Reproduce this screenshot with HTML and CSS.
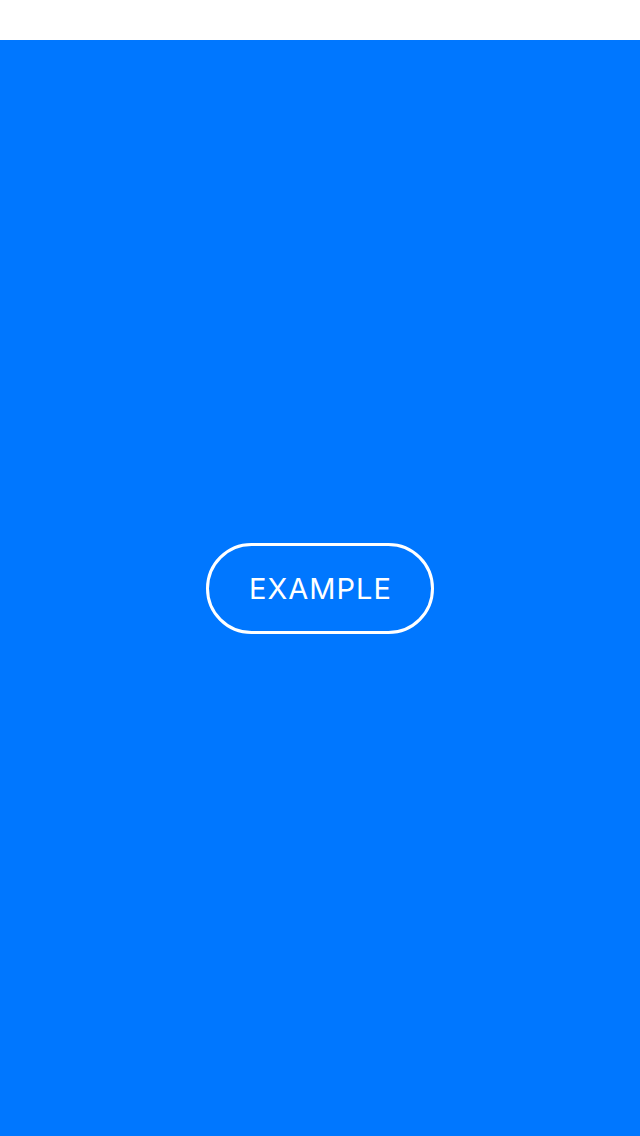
FILE: index.html
```html
<!DOCTYPE html>
<html>
<head>
<meta charset="utf-8">
<link rel="stylesheet" href="styles.css">
</head>
<body>
<div class="top"></div>
<main class="stage">
  <button class="pill"><span class="label">EXAMPLE</span></button>
</main>
</body>
</html>
```
FILE: styles.css
```css
html, body {
  margin: 0;
  padding: 0;
  background: #ffffff;
}
body {
  display: flex;
  flex-direction: column;
  height: 1136px;
}
.top {
  height: 40px;
  background: #ffffff;
}
.stage {
  flex: 1;
  background: #0077ff;
  display: flex;
  align-items: center;
  justify-content: center;
}
.pill {
  box-sizing: border-box;
  width: 228px;
  height: 91px;
  border: 3px solid #ffffff;
  border-radius: 46px;
  background: transparent;
  color: #ffffff;
  font-family: Inter, "Noto Sans", sans-serif;
  font-size: 29px;
  font-weight: 400;
  padding: 0;
  display: flex;
  align-items: center;
  justify-content: center;
}
.label {
  letter-spacing: 1px;
  margin-right: -1px;
}
```
